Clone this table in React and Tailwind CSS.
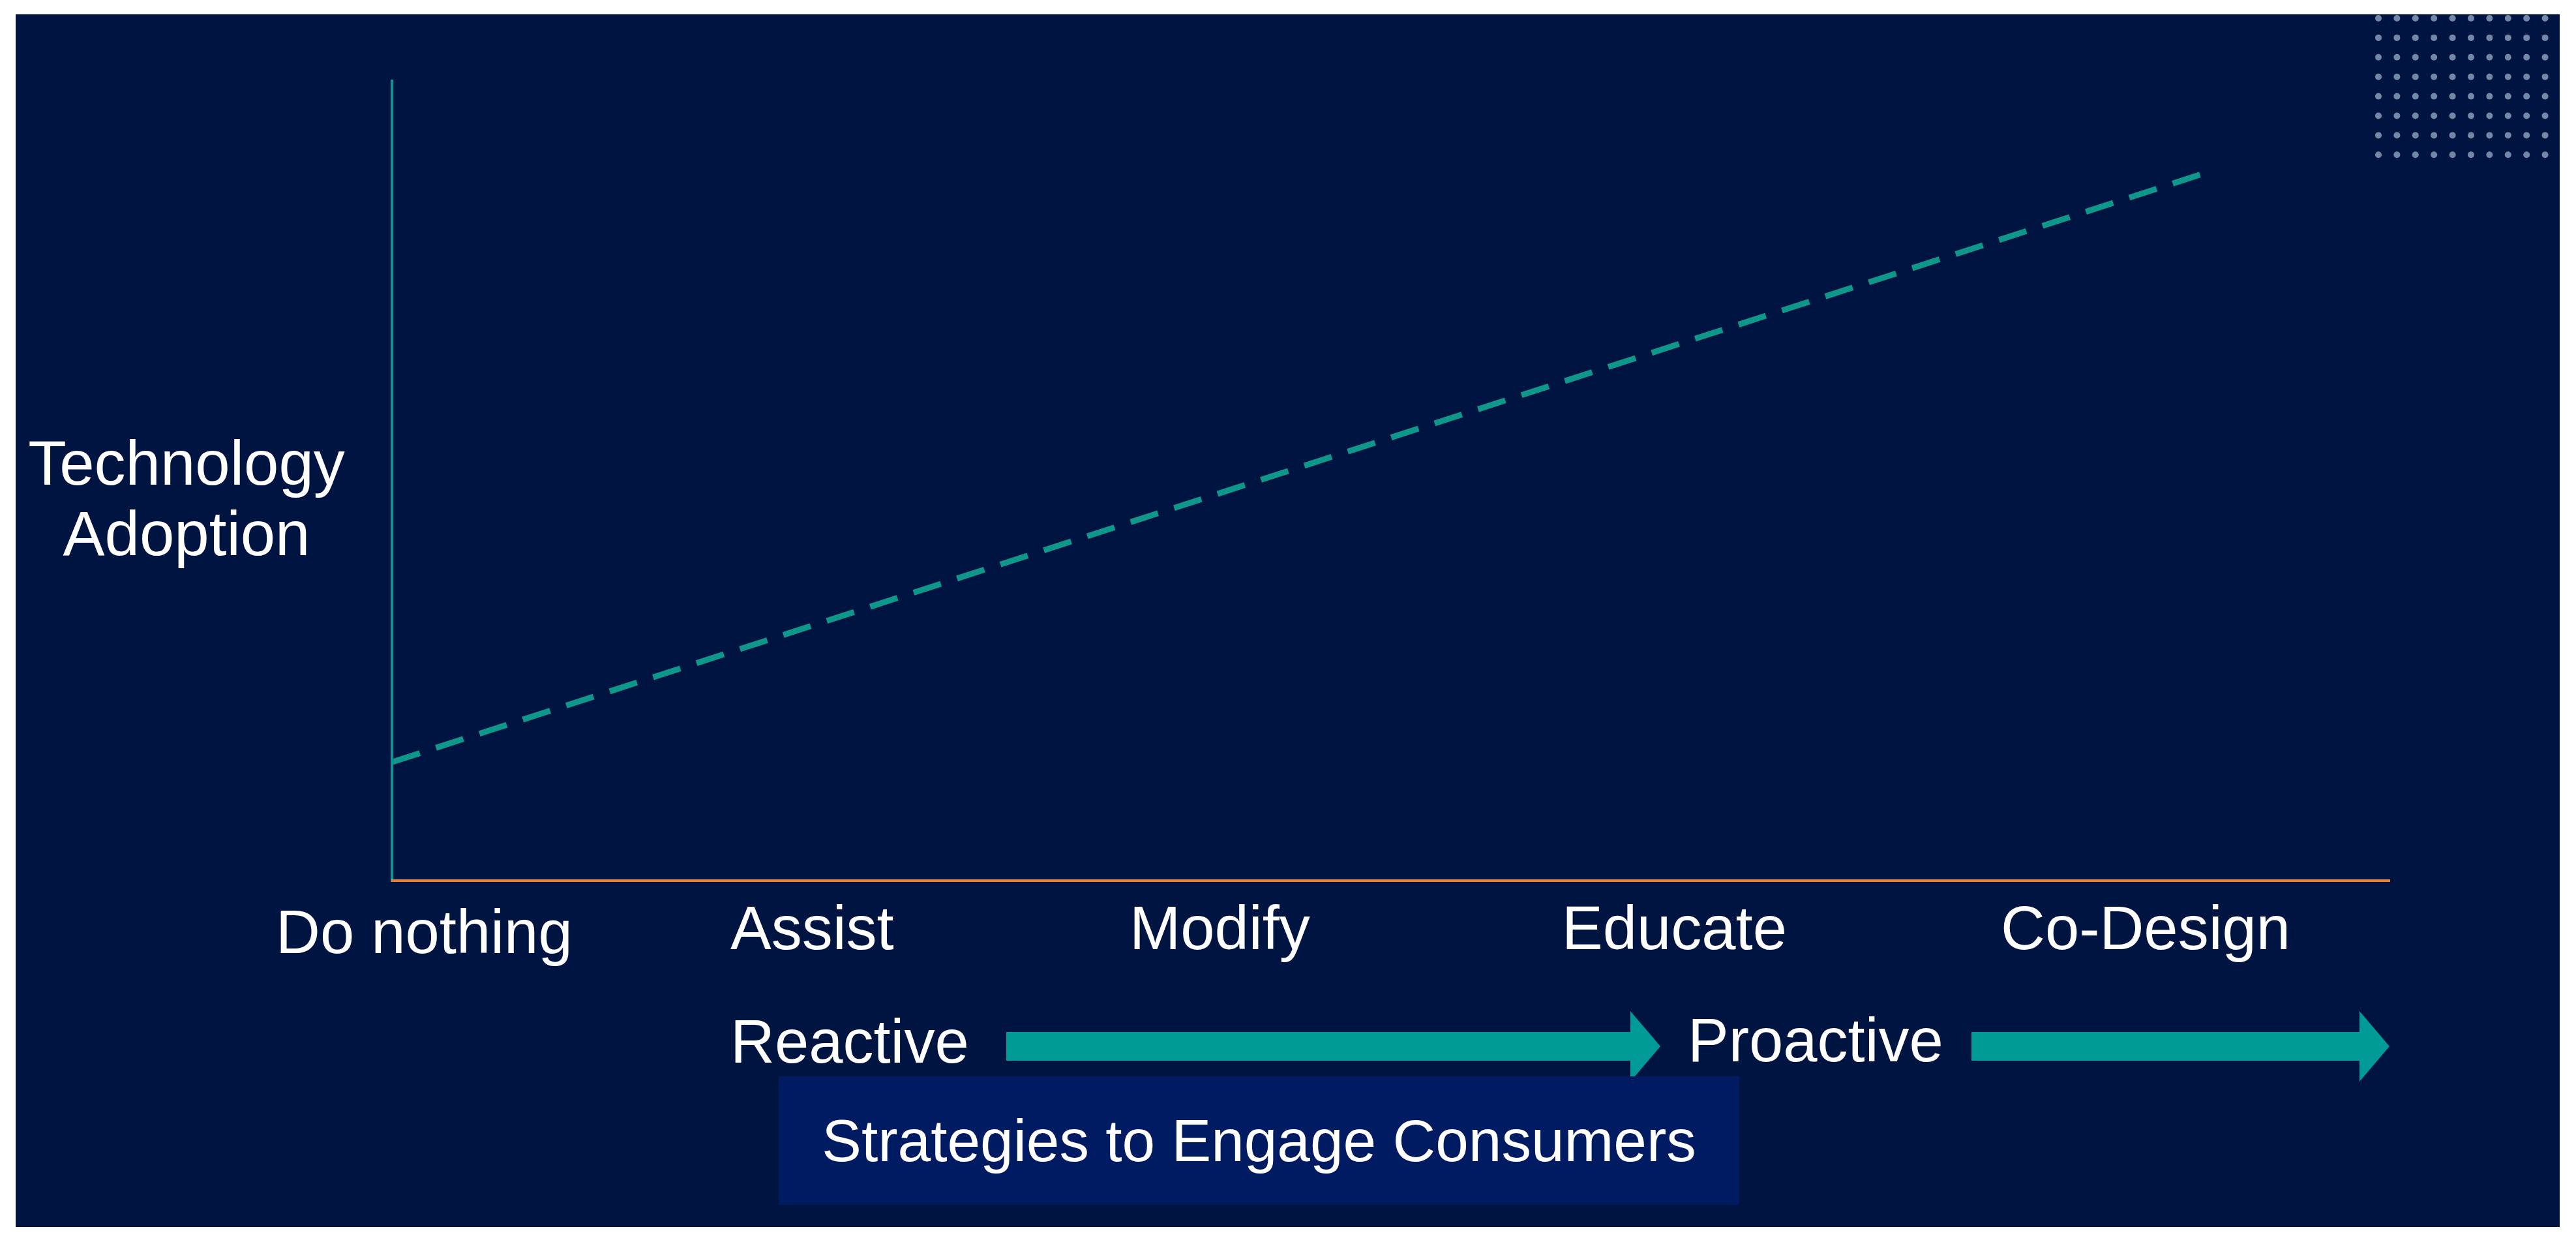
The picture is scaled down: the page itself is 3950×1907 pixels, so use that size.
const font = { fontFamily: '"Liberation Sans", Arial, sans-serif' };

const DotGrid = () => {
  const dots = [];
  for (let r = 0; r < 8; r++) {
    for (let c = 0; c < 10; c++) {
      dots.push(<circle key={r + "-" + c} cx={5 + c * 28.4} cy={6 + r * 29.9} r="5" fill="#7387a6" />);
    }
  }
  return (
    <svg className="absolute top-0 right-[17px]" width="266" height="225" viewBox="0 0 266 225">
      {dots}
    </svg>
  );
};

const Arrow = ({ width }) => (
  <svg width={width} height="120" viewBox={`0 0 ${width} 120`} className="block overflow-visible shrink-0">
    <rect x="0" y="39" width={width - 45} height="44" fill="#009b97" />
    <polygon points={`${width - 46},7 ${width},61 ${width - 46},115`} fill="#009b97" />
  </svg>
);

export default function App() {
  return (
    <div className="w-[3950px] h-[1907px] bg-white pt-[22px] pl-[24px]">
      <div
        className="relative w-[3901px] h-[1859px] bg-[#001441] text-white overflow-hidden flex flex-col"
        style={font}
      >
        <DotGrid />

        {/* chart */}
        <div className="flex">
          <div className="w-[560px] pr-[36px] pt-[634px] text-center text-[96px] leading-[108px]">
            <div>Technology</div>
            <div>Adoption</div>
          </div>
          <svg width="3341" height="1340" viewBox="0 0 3341 1340" className="block shrink-0">
            <line x1="17" y1="100" x2="17" y2="1330" stroke="#0e9494" strokeWidth="4" />
            <line x1="16" y1="1328" x2="3081" y2="1328" stroke="#e8843a" strokeWidth="4" />
            <line
              x1="18"
              y1="1146"
              x2="2795"
              y2="244"
              stroke="#10978b"
              strokeWidth="9"
              strokeDasharray="44 26"
            />
          </svg>
        </div>

        {/* x labels */}
        <div className="flex items-start mt-[7px] pl-[399px] text-[94px] leading-[108px]">
          <div className="w-[697px] mt-[6px]">Do nothing</div>
          <div className="w-[612px]">Assist</div>
          <div className="w-[663px]">Modify</div>
          <div className="w-[673px]">Educate</div>
          <div>Co-Design</div>
        </div>

        {/* reactive / proactive */}
        <div className="flex items-start h-[107px] mt-[60px] pl-[1096px] text-[94px] leading-[108px]">
          <div className="w-[423px] shrink-0">Reactive</div>
          <Arrow width={1003} />
          <div className="w-[435px] ml-[42px] shrink-0 -mt-[2px]">Proactive</div>
          <Arrow width={641} />
        </div>

        <div className="relative ml-[1170px] w-[1473px] h-[197px] bg-[#001b61] flex items-center justify-center text-[91px] leading-none">
          Strategies to Engage Consumers
        </div>
      </div>
    </div>
  );
}
